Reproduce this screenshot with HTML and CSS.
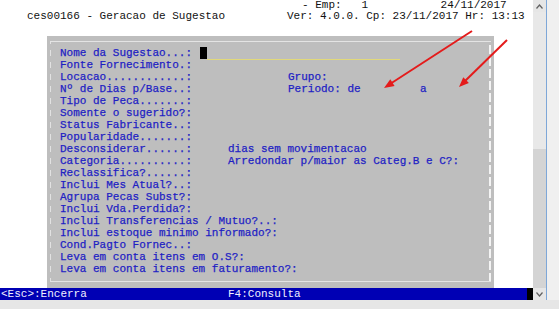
FILE: index.html
```html
<!DOCTYPE html>
<html lang="pt">
    <head>
        <meta charset="UTF-8">
        <title>ces00166 - Geracao de Sugestao</title>
        <link rel="stylesheet" href="styles.css">
    </head>
    <body>
        <div class="window">
            <div class="window__main">
                <div class="screen">
                    <header class="head">
                        <div class="head__title">ces00166 - Geracao de Sugestao</div>
                        <div class="head__info">
                            <div class="head__emp">- Emp:   1           24/11/2017</div>
                            <div class="head__ver">Ver: 4.0.0. Cp: 23/11/2017 Hr: 13:13</div>
                        </div>
                    </header>
                    <div class="body">
                        <section class="panel">
                            <div class="frame">
                                <div class="row">
                                    <span class="row__label">Nome da Sugestao...:</span>
                                    <span class="row__cursor"></span>
                                    <span class="row__input"></span>
                                </div>
                                <div class="row">Fonte Fornecimento.:</div>
                                <div class="row">
                                    <span class="row__label">Locacao............:</span>
                                    <span class="row__right">Grupo:</span>
                                </div>
                                <div class="row">
                                    <span class="row__label">Nº de Dias p/Base..:</span>
                                    <span class="row__right">Periodo: de         a</span>
                                </div>
                                <div class="row">Tipo de Peca.......:</div>
                                <div class="row">Somente o sugerido?:</div>
                                <div class="row">Status Fabricante..:</div>
                                <div class="row">Popularidade.......:</div>
                                <div class="row">
                                    <span class="row__label">Desconsiderar......:</span>
                                    <span class="row__mid">dias sem movimentacao</span>
                                </div>
                                <div class="row">
                                    <span class="row__label">Categoria..........:</span>
                                    <span class="row__mid">Arredondar p/maior as Categ.B e C?:</span>
                                </div>
                                <div class="row">Reclassifica?......:</div>
                                <div class="row">Inclui Mes Atual?..:</div>
                                <div class="row">Agrupa Pecas Subst?:</div>
                                <div class="row">Inclui Vda.Perdida?:</div>
                                <div class="row">Inclui Transferencias / Mutuo?..:</div>
                                <div class="row">Inclui estoque minimo informado?:</div>
                                <div class="row">Cond.Pagto Fornec..:</div>
                                <div class="row">Leva em conta itens em O.S?:</div>
                                <div class="row">Leva em conta itens em faturamento?:</div>
                            </div>
                        </section>
                    </div>
                    <footer class="keys">
                        <span class="keys__esc">&lt;Esc&gt;:Encerra</span>
                        <span>F4:Consulta</span>
                        <span class="keys__end"></span>
                    </footer>
                </div>
                <div class="scroll">
                    <div class="scroll__btn">
                        <svg width="7" height="5" viewBox="0 0 7 5"><path d="M0.5 4.5 L3.5 1 L6.5 4.5" fill="none" stroke="#606060" stroke-width="1.2"/></svg>
                    </div>
                    <div class="scroll__thumb"></div>
                    <div class="scroll__track"></div>
                    <div class="scroll__btn">
                        <svg width="7" height="5" viewBox="0 0 7 5"><path d="M0.5 0.5 L3.5 4 L6.5 0.5" fill="none" stroke="#606060" stroke-width="1.2"/></svg>
                    </div>
                </div>
                <div class="edge"></div>
                <div class="side"></div>
            </div>
            <div class="under"></div>
            <svg class="arrows" width="559" height="309" viewBox="0 0 559 309">
                <line x1="472" y1="31" x2="390" y2="84" stroke="#e41b1b" stroke-width="2"/>
                <polygon points="384,88 394.6,86 390.3,79.3" fill="#e41b1b"/>
                <line x1="507" y1="40" x2="464" y2="82" stroke="#e41b1b" stroke-width="2"/>
                <polygon points="459,87 468.9,82.9 463.3,77.2" fill="#e41b1b"/>
            </svg>
        </div>
    </body>
</html>
```

FILE: styles.css
```css
:root {
    --color-panel: #bebebe;
    --color-label: #1f1fc4;
    --color-frame: #e4e4e4;
    --color-bar: #0000b4;
    --font-term: "Liberation Mono", "DejaVu Sans Mono", monospace;
}

body {
    margin: 0;
    background-color: #ececec;
    font-family: var(--font-term);
    font-size: 11px;
}

.window {
    position: relative;
    width: 559px;
    height: 309px;
    overflow: hidden;
}

.window__main {
    display: flex;
    height: 300px;
}

.screen {
    display: flex;
    flex-direction: column;
    width: 533px;
    background-color: #fff;
}

.head {
    display: flex;
    height: 36px;
    padding-left: 27px;
    line-height: 11px;
    color: #111;
}

.head__title {
    flex: none;
    width: 260px;
    margin-top: 11px;
    white-space: pre;
}

.head__info {
    flex: none;
}

.head__emp,
.head__ver {
    white-space: pre;
}

.head__emp {
    padding-left: 15px;
}

.body {
    display: flex;
    height: 252px;
}

.panel {
    width: 447px;
    margin-left: 47px;
    padding: 5px 3px 6px 3px;
    box-sizing: border-box;
    background-color: var(--color-panel);
}

.frame {
    padding: 5px 0 6px 10px;
    border-top: 1px solid var(--color-frame);
    border-bottom: 1px solid var(--color-frame);
    background-image:
        linear-gradient(to bottom, #e2e2e2 6px, transparent 6px),
        linear-gradient(to bottom, #f4f4f4 9px, transparent 9px);
    background-size: 1px 12px, 2px 12px;
    background-repeat: repeat-y;
    background-position: left 0 top 8px, right 0 top 3px;
    color: var(--color-label);
    -webkit-text-stroke: 0.25px var(--color-label);
}

.row {
    display: flex;
    height: 12px;
    line-height: 12px;
    white-space: pre;
}

.row__label {
    flex: none;
    width: 140px;
}

.row__cursor {
    width: 7px;
    height: 12px;
    background-color: #000;
}

.row__input {
    width: 193px;
    height: 13px;
    box-sizing: border-box;
    border-bottom: 1px solid #e2d97a;
}

.row__right {
    margin-left: 88px;
}

.row__mid {
    margin-left: 28px;
}

.keys {
    display: flex;
    height: 12px;
    padding-left: 1px;
    line-height: 12px;
    background-color: var(--color-bar);
    color: #f0f0ff;
    white-space: pre;
}

.keys__esc {
    width: 227px;
}

.keys__end {
    width: 6px;
    margin-left: auto;
    background-color: #000;
}

.scroll {
    display: flex;
    flex-direction: column;
    width: 13px;
    background-color: #e6e6e6;
}

.scroll__btn {
    display: flex;
    justify-content: center;
    align-items: center;
    height: 12px;
}

.scroll__thumb {
    height: 137px;
    background-color: #e8e8e8;
}

.scroll__track {
    flex: 1;
    background-color: #d4d4d4;
}

.edge {
    width: 1px;
    background-color: #7ea7d8;
}

.side {
    flex: 1;
    background-color: #f0f0f0;
}

.under {
    height: 9px;
    background-color: #e6e6e6;
}

.arrows {
    position: absolute;
    top: 0;
    left: 0;
    pointer-events: none;
}
```
